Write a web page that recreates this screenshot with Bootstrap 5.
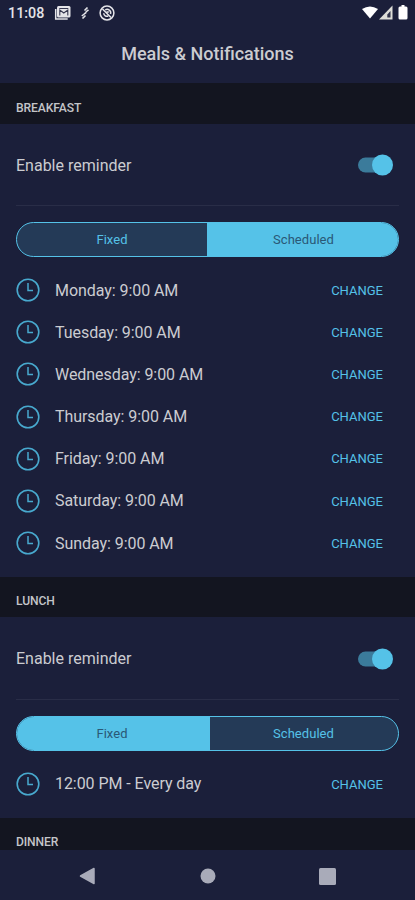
<!DOCTYPE html>
<html lang="en" data-bs-theme="dark">
<head>
<meta charset="utf-8">
<meta name="viewport" content="width=device-width, initial-scale=1">
<title>Meals &amp; Notifications</title>
<link href="https://cdn.jsdelivr.net/npm/bootstrap@5.3.0/dist/css/bootstrap.min.css" rel="stylesheet">
<style>
:root { --navy:#1b1f3a; --band:#131520; --sky:#55c2e8; --slate:#243a57; --ink:#cbccd1; }
body { background:var(--navy); color:var(--ink); font-family:Roboto,"Liberation Sans",sans-serif; font-size:16px; line-height:20px; }
.screen { height:900px; }
.status-line { height:26px; padding:0 6px 0 8px; color:#e4e4e8; font-size:14.3px; font-weight:500; }
.icon-news { margin-left:10px; }
.icon-sync { margin-left:10px; }
.icon-mute { margin-left:10px; }
.page-title { height:57px; font-size:18px; font-weight:500; padding-bottom:1px; color:var(--ink); }
.meal-band { height:40px; background:var(--band); color:#c4c5c9; font-size:12.1px; font-weight:500; padding-top:9px; letter-spacing:-.1px; }
.band-first { height:41px; }
.enable-row { height:82px; border-bottom:1px solid #292d47; padding-right:6px; padding-top:2px; }
.enable-row + .segments { margin-top:16px; }
.lunch .enable-row { height:83px; padding-top:3px; }
.toggle { width:35px; height:22px; margin-top:-1px; }
.segments { height:35px; border:1.5px solid var(--sky); border-radius:18px; overflow:hidden; background:var(--slate); }
.segments .btn { --bs-btn-border-width:0; --bs-btn-padding-x:0; --bs-btn-padding-y:0; --bs-btn-border-radius:0; --bs-btn-color:var(--sky); --bs-btn-active-bg:var(--sky); --bs-btn-active-color:#2a5876; font-size:13px; letter-spacing:.05px; }
.seg-fixed { width:190px; }
.segments .seg-fixed + .btn { padding-left:2px; }
.lunch .segments .seg-fixed { width:193px; padding-right:3px; }
.lunch .segments .seg-fixed + .btn { padding-left:0; padding-right:1px; }
.times { padding-top:12px; padding-bottom:12.8px; }
.time-row { height:42.17px; padding-top:1px; }
.time-row span { letter-spacing:-.06px; }
.time-row svg { margin-right:15px; margin-top:-1px; }
.change { --bs-btn-color:var(--sky); --bs-btn-hover-color:var(--sky); --bs-btn-border-width:0; --bs-btn-padding-x:16px; font-size:13px; }
.nav-keys { height:50px; background:var(--navy); padding:2px 79px 0; }
</style>
<script src="https://cdn.jsdelivr.net/npm/bootstrap@5.3.0/dist/js/bootstrap.bundle.min.js" defer></script>
</head>
<body>
<svg class="d-none">
  <symbol id="clock" viewBox="0 0 24 24"><circle cx="12" cy="12" r="10.8" fill="none" stroke="#48a9ce" stroke-width="1.6"/><path d="M12 5v7.500h5" fill="none" stroke="#48a9ce" stroke-width="1.500"/></symbol>
  <symbol id="switch-on" viewBox="0 0 35 22"><rect x="0" y="3.500" width="30" height="15" rx="7.500" fill="#3b7b9b"/><circle cx="24.500" cy="11" r="10.500" fill="#55c2e8"/></symbol>
</svg>
<div class="screen d-flex flex-column overflow-hidden">
  <header class="flex-shrink-0">
    <div class="status-line d-flex align-items-center">
      <span>11:08</span>
      <svg width="17" height="16" viewBox="0 0 17 16" class="icon-news"><path d="M1.700 4v10h12" fill="none" stroke="#e4e4e8" stroke-width="1.500"/><rect x="3" y="1" width="13.500" height="11.500" rx="1.500" fill="#e4e4e8"/><path d="M5.800 10.500V5l4 3 4-3v5.500M5.300 3.500h9" fill="none" stroke="#34364e" stroke-width="1.100"/></svg>
      <svg width="8" height="14" viewBox="0 0 8 14" class="icon-sync"><path d="M3.500 4.500 6.500 1.500M4.800 6 7.500 3.800M.8 10l3-2.500M1.500 12.500l3-3M3.300 7.800l2-1.500" fill="none" stroke="#e4e4e8" stroke-width="1.600"/></svg>
      <svg width="16" height="16" viewBox="0 0 16 16" class="icon-mute"><circle cx="8" cy="8" r="6.900" fill="none" stroke="#e4e4e8" stroke-width="1.500"/><path d="M3.500 4 12 12.500M4.700 8.200a3.500 3.500 0 0 0 4.500 3M6.200 5a3.500 3.500 0 0 1 5.300 4M7.500 7l2.300 0" fill="none" stroke="#e4e4e8" stroke-width="1.500"/></svg>
      <svg width="48" height="16" viewBox="0 0 48 16" class="ms-auto"><path d="M1 4Q9-1 17 4L9 13.500Z" fill="#fff"/><path d="M31.500.500V14.500H18Z" fill="#deded8"/><path d="M29.500 6v6.500h-3.200V9.500Z" fill="#30334a"/><path d="M39 1.500h1.500V0h3v1.500H45q1.500 0 1.500 1.500v10q0 1.500-1.500 1.500h-6q-1.500 0-1.500-1.500V3q0-1.500 1.500-1.500Z" fill="#fff"/></svg>
    </div>
    <h1 class="page-title m-0 d-flex align-items-center justify-content-center">Meals &amp; Notifications</h1>
  </header>
  <main class="flex-grow-1 overflow-hidden">
    <section>
      <h2 class="meal-band band-first m-0 px-3 d-flex align-items-center">BREAKFAST</h2>
      <div class="px-3">
        <div class="enable-row d-flex align-items-center justify-content-between"><span>Enable reminder</span><svg class="toggle"><use href="#switch-on"/></svg></div>
        <div class="segments d-flex"><button class="btn seg-fixed">Fixed</button><button class="btn active flex-fill">Scheduled</button></div>
        <div class="times">
          <div class="time-row d-flex align-items-center"><svg width="24" height="24"><use href="#clock"/></svg><span>Monday: 9:00 AM</span><button class="btn change ms-auto">CHANGE</button></div>
          <div class="time-row d-flex align-items-center"><svg width="24" height="24"><use href="#clock"/></svg><span>Tuesday: 9:00 AM</span><button class="btn change ms-auto">CHANGE</button></div>
          <div class="time-row d-flex align-items-center"><svg width="24" height="24"><use href="#clock"/></svg><span>Wednesday: 9:00 AM</span><button class="btn change ms-auto">CHANGE</button></div>
          <div class="time-row d-flex align-items-center"><svg width="24" height="24"><use href="#clock"/></svg><span>Thursday: 9:00 AM</span><button class="btn change ms-auto">CHANGE</button></div>
          <div class="time-row d-flex align-items-center"><svg width="24" height="24"><use href="#clock"/></svg><span>Friday: 9:00 AM</span><button class="btn change ms-auto">CHANGE</button></div>
          <div class="time-row d-flex align-items-center"><svg width="24" height="24"><use href="#clock"/></svg><span>Saturday: 9:00 AM</span><button class="btn change ms-auto">CHANGE</button></div>
          <div class="time-row d-flex align-items-center"><svg width="24" height="24"><use href="#clock"/></svg><span>Sunday: 9:00 AM</span><button class="btn change ms-auto">CHANGE</button></div>
        </div>
      </div>
    </section>
    <section class="lunch">
      <h2 class="meal-band m-0 px-3 d-flex align-items-center">LUNCH</h2>
      <div class="px-3">
        <div class="enable-row d-flex align-items-center justify-content-between"><span>Enable reminder</span><svg class="toggle"><use href="#switch-on"/></svg></div>
        <div class="segments d-flex"><button class="btn active seg-fixed">Fixed</button><button class="btn flex-fill">Scheduled</button></div>
        <div class="times">
          <div class="time-row d-flex align-items-center"><svg width="24" height="24"><use href="#clock"/></svg><span>12:00 PM - Every day</span><button class="btn change ms-auto">CHANGE</button></div>
        </div>
      </div>
    </section>
    <section><h2 class="meal-band m-0 px-3 d-flex align-items-center">DINNER</h2></section>
  </main>
  <nav class="nav-keys flex-shrink-0 d-flex align-items-center justify-content-between">
    <svg width="17" height="18" viewBox="0 0 17 18"><path d="M1.500 9 15 1.500v15Z" fill="#a9abb9" stroke="#a9abb9" stroke-width="1.500" stroke-linejoin="round"/></svg>
    <svg width="16" height="16"><circle cx="8" cy="8" r="7.500" fill="#a9abb9"/></svg>
    <svg width="17" height="17"><rect width="17" height="17" rx="1.500" fill="#a9abb9"/></svg>
  </nav>
</div>
</body>
</html>
